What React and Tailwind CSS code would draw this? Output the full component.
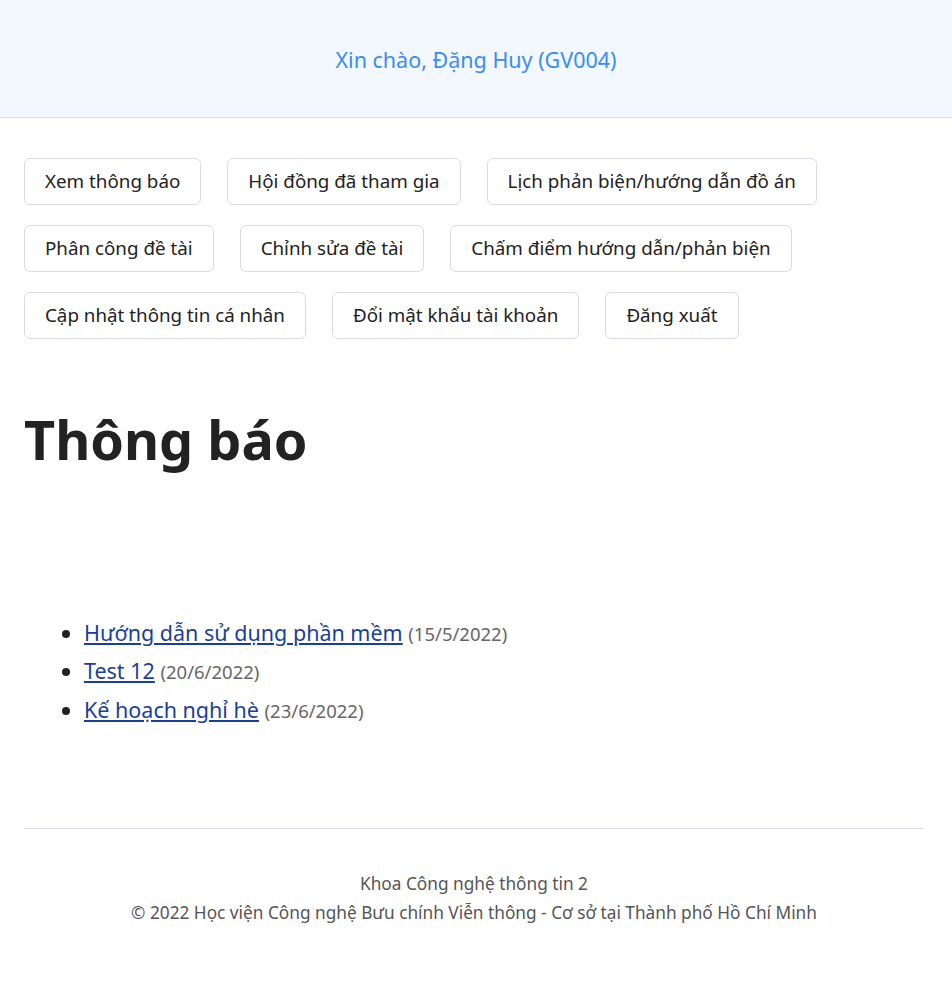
const buttons = [
  'Xem thông báo',
  'Hội đồng đã tham gia',
  'Lịch phản biện/hướng dẫn đồ án',
  'Phân công đề tài',
  'Chỉnh sửa đề tài',
  'Chấm điểm hướng dẫn/phản biện',
  'Cập nhật thông tin cá nhân',
  'Đổi mật khẩu tài khoản',
  'Đăng xuất',
];

const notices = [
  { title: 'Hướng dẫn sử dụng phần mềm', date: '15/5/2022' },
  { title: 'Test 12', date: '20/6/2022' },
  { title: 'Kế hoạch nghỉ hè', date: '23/6/2022' },
];

export default function App() {
  return (
    <div className="min-h-screen bg-white text-[#212121]" style={{ fontFamily: '"Noto Sans", "Open Sans", sans-serif' }}>
      <header className="h-[118px] pt-[4px] bg-[#f3f7fe] border-b border-[#dcdde2] flex items-center justify-center">
        <span className="text-[21.5px] text-[#3a8ef2]">Xin chào, Đặng Huy (GV004)</span>
      </header>

      <div className="px-6">
        <nav className="pt-[40px] flex flex-wrap gap-x-[26px] gap-y-[20px] max-w-[840px]">
          {buttons.map((label) => (
            <button
              key={label}
              className="h-[47px] px-[20px] border border-[#dadae2] rounded-[6px] bg-white text-[18.8px] text-[#222]"
            >
              {label}
            </button>
          ))}
        </nav>

        <h1 className="mt-[68px] text-[54px] font-bold leading-[1.2] text-[#222]">Thông báo</h1>

        <ul className="mt-[142px] pl-[60px] list-disc">
          {notices.map((n) => (
            <li key={n.title} className="leading-[37.5px] text-[21.5px]">
              <a href="#" className="underline text-[#1a3f9a]">{n.title}</a>{' '}
              <span className="text-[18.5px] text-[#666]">({n.date})</span>
            </li>
          ))}
        </ul>

        <footer className="mt-[99px] w-[900px] border-t border-[#dcdde2] pt-[40px] pb-[50px] text-center text-[17.25px] leading-[29px] text-[#555]">
          <div>Khoa Công nghệ thông tin 2</div>
          <div>© 2022 Học viện Công nghệ Bưu chính Viễn thông - Cơ sở tại Thành phố Hồ Chí Minh</div>
        </footer>
      </div>
    </div>
  );
}
